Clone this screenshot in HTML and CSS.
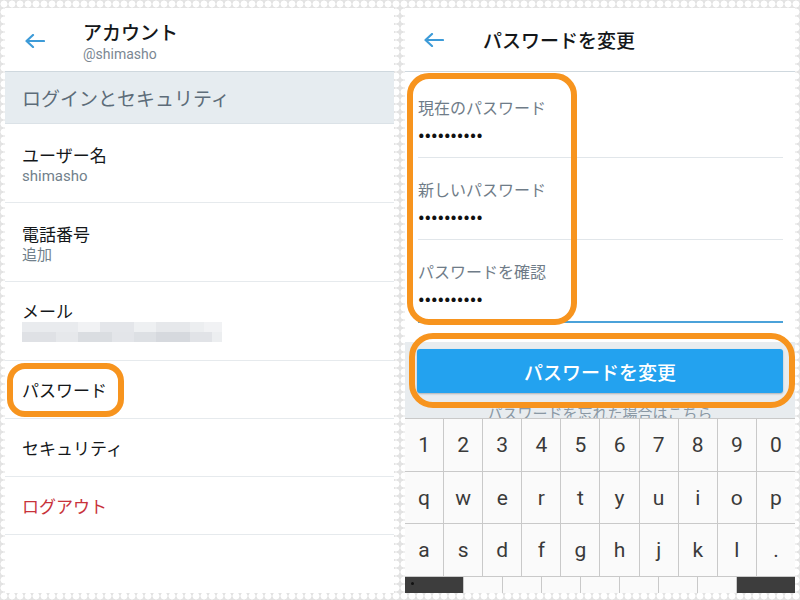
FILE: index.html
```html
<!DOCTYPE html>
<html lang="ja">
<head>
<meta charset="utf-8">
<title>アカウント / パスワードを変更</title>
<link rel="stylesheet" href="styles.css">
</head>
<body>
<div class="stage">
  <section class="panel">
    <header class="appbar">
      <svg class="back" viewBox="0 0 20 14" width="20" height="14"><path d="M1.5 7H19M8 1L1.5 7L8 13" fill="none" stroke="#3d9bd8" stroke-width="2.2" stroke-linecap="round" stroke-linejoin="round"/></svg>
      <div class="titles">
        <div class="title">アカウント</div>
        <div class="handle">@shimasho</div>
      </div>
    </header>
    <div class="section-head">ログインとセキュリティ</div>
    <ul class="list">
      <li class="item two"><div class="item-title">ユーザー名</div><div class="item-sub">shimasho</div></li>
      <li class="item two"><div class="item-title">電話番号</div><div class="item-sub">追加</div></li>
      <li class="item mail"><div class="item-title">メール</div>
        <svg class="blur" viewBox="0 0 200 20" width="200" height="20">
          <rect x="0" y="0" width="56" height="10" fill="#e9ebee"/>
          <rect x="56" y="0" width="22" height="10" fill="#f1f2f4"/>
          <rect x="78" y="0" width="34" height="10" fill="#e4e6ea"/>
          <rect x="112" y="0" width="22" height="10" fill="#eef0f2"/>
          <rect x="134" y="0" width="34" height="10" fill="#e6e8eb"/>
          <rect x="168" y="0" width="14" height="10" fill="#eceef0"/>
          <rect x="182" y="0" width="18" height="10" fill="#f1f2f4"/>
          <rect x="0" y="10" width="34" height="10" fill="#dfe1e5"/>
          <rect x="34" y="10" width="22" height="10" fill="#e6e8eb"/>
          <rect x="56" y="10" width="34" height="10" fill="#dadde1"/>
          <rect x="90" y="10" width="22" height="10" fill="#e3e5e9"/>
          <rect x="112" y="10" width="22" height="10" fill="#dde0e4"/>
          <rect x="134" y="10" width="34" height="10" fill="#d6d9de"/>
          <rect x="168" y="10" width="22" height="10" fill="#e1e3e7"/>
          <rect x="190" y="10" width="10" height="10" fill="#eceef0"/>
        </svg>
      </li>
      <li class="item one">パスワード</li>
      <li class="item one">セキュリティ</li>
      <li class="item one danger">ログアウト</li>
    </ul>
    <div class="mark mark-pw"></div>
  </section>

  <section class="panel">
    <header class="appbar">
      <svg class="back" viewBox="0 0 20 14" width="20" height="14"><path d="M1.5 7H19M8 1L1.5 7L8 13" fill="none" stroke="#3d9bd8" stroke-width="2.2" stroke-linecap="round" stroke-linejoin="round"/></svg>
      <div class="title">パスワードを変更</div>
    </header>
    <div class="form">
      <div class="field first"><div class="label">現在のパスワード</div><div class="dots">••••••••••</div></div>
      <div class="field"><div class="label">新しいパスワード</div><div class="dots">••••••••••</div></div>
      <div class="field focus"><div class="label">パスワードを確認</div><div class="dots">••••••••••</div></div>
    </div>
    <div class="spacer"></div>
    <div class="actions">
      <div class="button">パスワードを変更</div>
      <div class="forgot">パスワードを忘れた場合はこちら</div>
    </div>
    <div class="keyboard">
      <div class="keys">
        <span>1</span><span>2</span><span>3</span><span>4</span><span>5</span><span>6</span><span>7</span><span>8</span><span>9</span><span>0</span>
        <span>q</span><span>w</span><span>e</span><span>r</span><span>t</span><span>y</span><span>u</span><span>i</span><span>o</span><span>p</span>
        <span>a</span><span>s</span><span>d</span><span>f</span><span>g</span><span>h</span><span>j</span><span>k</span><span>l</span><span>.</span>
      </div>
      <div class="bottom-row">
        <span class="dark"><i class="pip"></i></span><span></span><span></span><span></span><span></span><span></span><span></span><span></span><span class="dark"></span>
      </div>
    </div>
    <div class="mark mark-fields"></div>
    <div class="mark mark-button"></div>
  </section>
</div>
</body>
</html>
```

FILE: styles.css
```css
* { box-sizing: border-box; }
html, body { margin: 0; padding: 0; }
body {
  width: 800px;
  height: 600px;
  overflow: hidden;
  background-color: #e3e3e3;
  background-image: radial-gradient(circle at 50% 50%, #ffffff 0 3.2px, rgba(255,255,255,0) 3.8px);
  background-size: 8px 8px;
  font-family: "Noto Sans CJK JP", Roboto, sans-serif;
  color: #14171a;
}
.stage {
  display: flex;
  gap: 11px;
  padding: 8px 5px 0 5px;
  height: 600px;
}
.panel {
  position: relative;
  background: #ffffff;
  height: 585px;
  overflow: hidden;
  display: flex;
  flex-direction: column;
}
.stage > .panel:first-child { width: 389px; }
.stage > .panel:last-child { width: 390px; }

.appbar {
  height: 64px;
  flex: none;
  display: flex;
  align-items: center;
  padding-top: 3px;
  border-bottom: 1px solid #cfd8de;
  padding-left: 20px;
}
.panel:last-child .appbar { padding-left: 19px; padding-top: 0; }
.back { flex: none; display: block; }
.titles { margin-left: 38px; }
.title {
  font-size: 19px;
  line-height: 26px;
  font-weight: 500;
  color: #14171a;
}
.panel:last-child .title { margin-left: 39px; }
.handle {
  font-family: Roboto, "Noto Sans CJK JP", sans-serif;
  font-size: 14px;
  line-height: 18px;
  color: #7b8792;
}

.section-head {
  height: 52px;
  flex: none;
  background: #e6ecf0;
  border-bottom: 1px solid #dbe2e7;
  padding-left: 17px;
  display: flex;
  align-items: center;
  font-size: 19px;
  color: #5d6c79;
}

.list { list-style: none; margin: 0; padding: 0; }
.item {
  border-bottom: 1px solid #e6eaed;
  padding-left: 17px;
  font-size: 17px;
}
.item.two { height: 79px; padding-top: 20px; }
.item-title { line-height: 22px; }
.item-sub {
  font-family: Roboto, "Noto Sans CJK JP", sans-serif;
  font-size: 15px;
  line-height: 20px;
  color: #717f8b;
}
.item.mail { height: 79px; padding-top: 18px; }
.blur { display: block; }
.item.one {
  height: 58px;
  display: flex;
  align-items: center;
}
.item.danger { color: #c8323a; }

.mark {
  position: absolute;
  border: 6px solid #f7941e;
}
.mark-pw { left: 2px; top: 355px; width: 117px; height: 54px; border-radius: 18px; }
.mark-fields { left: 2px; top: 65px; width: 170px; height: 252px; border-radius: 22px; }
.mark-button { left: 4px; top: 325px; width: 386px; height: 75px; border-radius: 24px; }

.form { padding: 0 12px 0 13px; flex: none; }
.field {
  height: 82px;
  padding-top: 20px;
  border-bottom: 1px solid #e1e6ea;
}
.field.first { height: 86px; padding-top: 24px; }
.field.focus { border-bottom: 2px solid #4ba2d9; height: 83px; }
.label {
  font-size: 16px;
  line-height: 22px;
  color: #6f7c88;
}
.dots {
  margin-top: 11px;
  font-family: Roboto, sans-serif;
  font-size: 18px;
  line-height: 16px;
  letter-spacing: 0;
  color: #111;
  font-weight: 700;
}
.spacer { height: 19px; flex: none; }
.actions {
  height: 76px;
  flex: none;
  background: #e8ecef;
  padding: 7px 12px 0 12px;
  overflow: hidden;
}
.button {
  height: 44px;
  background: #23a2ef;
  border-radius: 3px;
  box-shadow: 0 1px 2px rgba(0,0,0,0.25);
  color: #ffffff;
  font-size: 19px;
  font-weight: 500;
  display: flex;
  align-items: center;
  justify-content: center;
}
.forgot {
  margin-top: 10px;
  text-align: center;
  font-size: 15px;
  line-height: 20px;
  color: #8a98a4;
}

.keyboard {
  flex: 1;
  border-top: 1px solid #c9c9c9;
  background: #c9c9c9;
  display: flex;
  flex-direction: column;
  gap: 1px;
}
.keys {
  display: grid;
  grid-template-columns: repeat(10, 1fr);
  grid-template-rows: 52px 51px 52px;
  gap: 1px;
}
.keys span {
  background: #fafafa;
  display: flex;
  align-items: center;
  justify-content: center;
  font-family: Roboto, sans-serif;
  font-size: 21px;
  color: #3a3a3a;
}
.bottom-row {
  flex: 1;
  display: grid;
  grid-template-columns: 58px repeat(7, 1fr) 58px;
  gap: 1px;
}
.bottom-row span { background: #fafafa; position: relative; }
.bottom-row span.dark { background: #3d3d3d; }
.pip {
  position: absolute;
  left: 6px;
  top: 5px;
  width: 3px;
  height: 3px;
  background: #111;
  border-radius: 50%;
}
```
